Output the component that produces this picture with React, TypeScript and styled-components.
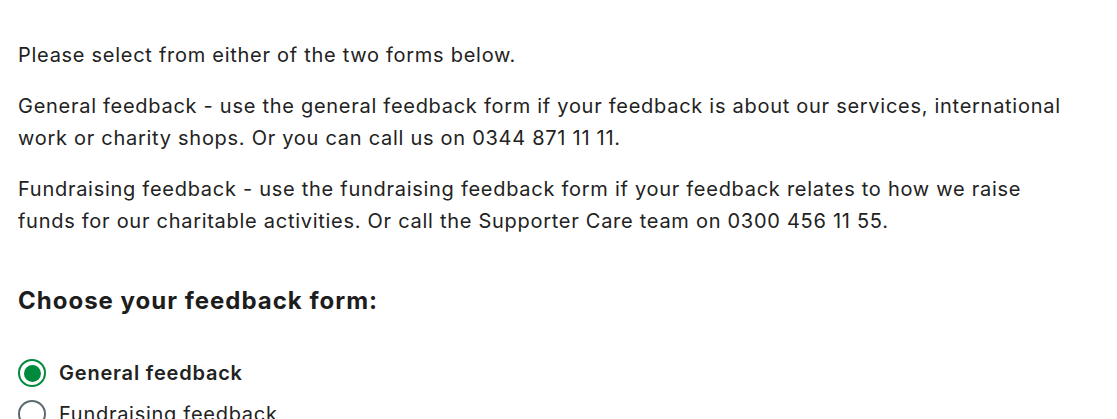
import React from 'react';
import styled, { createGlobalStyle } from 'styled-components';

const GlobalStyle = createGlobalStyle`
  body {
    margin: 0;
    background: #fff;
    font-family: Inter, "Noto Sans", sans-serif;
    color: #222;
  }
`;

function App() {
  const [choice, setChoice] = React.useState('general');

  return (
    <Page>
      <GlobalStyle />
      <Paragraph>Please select from either of the two forms below.</Paragraph>
      <Paragraph>
        General feedback - use the general feedback form if your feedback is about our services,
        international work or charity shops. Or you can call us on 0344 871 11 11.
      </Paragraph>
      <Paragraph>
        Fundraising feedback - use the fundraising feedback form if your feedback relates to how we
        raise funds for our charitable activities. Or call the Supporter Care team on 0300 456 11 55.
      </Paragraph>
      <Heading>Choose your feedback form:</Heading>
      <Options>
        <Option>
          <RadioInput
            type="radio"
            name="form"
            checked={choice === 'general'}
            onChange={() => setChoice('general')}
          />
          <OptionLabel selected={choice === 'general'}>General feedback</OptionLabel>
        </Option>
        <Option>
          <RadioInput
            type="radio"
            name="form"
            checked={choice === 'fundraising'}
            onChange={() => setChoice('fundraising')}
          />
          <OptionLabel selected={choice === 'fundraising'}>Fundraising feedback</OptionLabel>
        </Option>
      </Options>
    </Page>
  );
}

const Page = styled.main`
  width: 1050px;
  padding: 39px 0 0 18px;
`;

const Paragraph = styled.p`
  margin: 0 0 19px;
  font-size: 20px;
  line-height: 32px;
  letter-spacing: 0.72px;
  font-weight: 400;
`;

const Heading = styled.h2`
  margin: 48px 0 42px;
  font-size: 24px;
  line-height: 32px;
  font-weight: 700;
  letter-spacing: 1px;
  color: #1d1d1d;
`;

const Options = styled.div`
  display: flex;
  flex-direction: column;
  gap: 13px;
`;

const Option = styled.label`
  display: flex;
  align-items: center;
  gap: 13px;
  cursor: pointer;
`;

const RadioInput = styled.input`
  appearance: none;
  margin: 0;
  width: 28px;
  height: 28px;
  border-radius: 50%;
  border: 2px solid #5b6b71;
  background: #fff;
  display: grid;
  place-content: center;
  &::before {
    content: '';
    width: 17px;
    height: 17px;
    border-radius: 50%;
    background: #008a3c;
    transform: scale(0);
  }
  &:checked {
    border-color: #008a3c;
  }
  &:checked::before {
    transform: scale(1);
  }
`;

const OptionLabel = styled.span<{ selected: boolean }>`
  font-size: 20px;
  line-height: 28px;
  letter-spacing: ${(p) => (p.selected ? '0.8px' : '0.72px')};
  font-weight: ${(p) => (p.selected ? 600 : 400)};
`;

export default App;
